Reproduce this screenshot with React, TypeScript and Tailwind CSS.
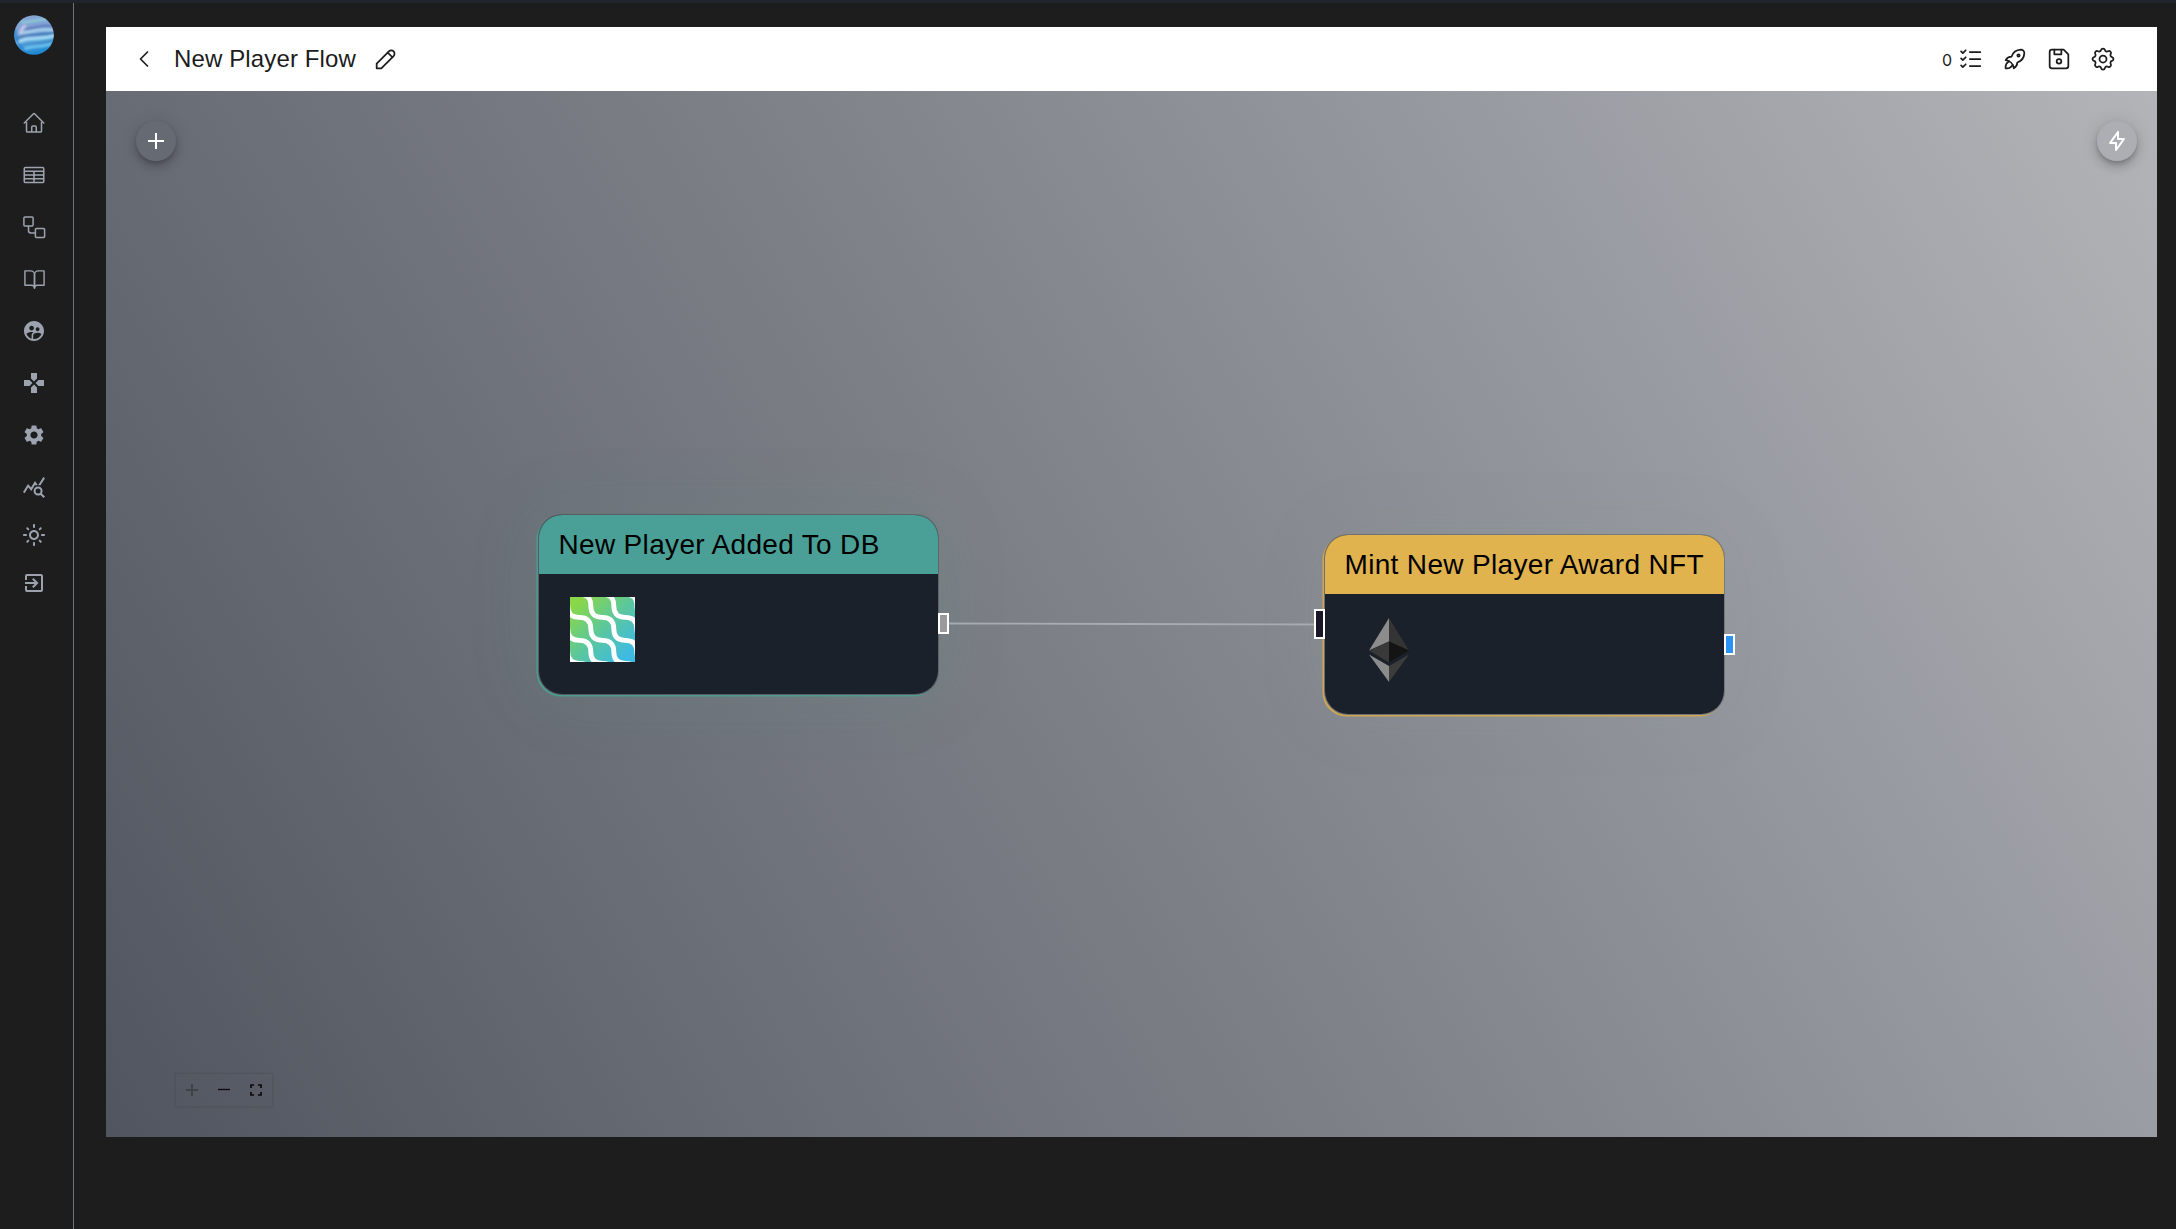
import type { ReactNode } from 'react';
import { HiOutlineHome, HiOutlineTableCells } from 'react-icons/hi2';
import { FiBookOpen } from 'react-icons/fi';
import {
  MdExitToApp,
  MdGamepad,
  MdOutlineLightMode,
  MdQueryStats,
  MdSettings,
  MdSupervisedUserCircle,
} from 'react-icons/md';
import {
  TbBolt,
  TbChevronLeft,
  TbDeviceFloppy,
  TbListCheck,
  TbPencil,
  TbRocket,
  TbSettings,
} from 'react-icons/tb';

function GlobeLogo() {
  return (
    <svg width="40" height="40" viewBox="0 0 40 40">
      <defs>
        <linearGradient id="globe" x1="0.35" y1="0" x2="0.6" y2="1">
          <stop offset="0" stopColor="#86a6d4" />
          <stop offset="0.35" stopColor="#7fa3d6" />
          <stop offset="0.65" stopColor="#5aa9dc" />
          <stop offset="1" stopColor="#1482cf" />
        </linearGradient>
        <clipPath id="globeClip">
          <circle cx="20" cy="20" r="19.8" />
        </clipPath>
        <filter id="soft" x="-10%" y="-10%" width="120%" height="120%">
          <feGaussianBlur stdDeviation="0.9" />
        </filter>
      </defs>
      <g clipPath="url(#globeClip)">
        <rect width="40" height="40" fill="url(#globe)" />
        <g fill="none" strokeLinecap="round" filter="url(#soft)">
          <path d="M8 7C16 8 24 4 33 4" stroke="#8fd0d6" strokeWidth="2" />
          <path d="M12 14C18 14 26 10 37 11" stroke="#5a74b8" strokeWidth="2" />
          <path d="M6 18C14 18 24 13 38 15" stroke="#b0d6f0" strokeWidth="2.4" />
          <path d="M3 24C9 18 22 21 39 18" stroke="#3c69ae" strokeWidth="1.8" />
          <path d="M3 28C9 22 24 25 40 21" stroke="#b4e2f8" strokeWidth="2.6" />
          <path d="M5 31C12 27 22 30 38 26" stroke="#3f86c8" strokeWidth="1.6" />
          <path d="M9 35C16 30 26 33 37 29" stroke="#7ccbf4" strokeWidth="2" />
          <path d="M1 16C1 24 5 33 14 38" stroke="#1f86d6" strokeWidth="2.4" />
          <path d="M7 18C7 14 9 12 11 11" stroke="#cfc9ea" strokeWidth="2.6" />
        </g>
      </g>
    </svg>
  );
}

function FlowIcon() {
  return (
    <svg width="24" height="24" viewBox="0 0 24 24" fill="none" stroke="currentColor" strokeWidth="1.5">
      <rect x="1.9" y="1.9" width="9.2" height="9.2" rx="1" />
      <rect x="13.4" y="13.4" width="9.2" height="9.2" rx="1" />
      <path d="M6.500 11.100v4.400q0 2.500 2.500 2.500h4.400" />
    </svg>
  );
}

const tall = 'h-[52px]';
const medium = 'h-12';

const navItems: { name: string; icon: ReactNode; size: string }[] = [
  { name: 'Home', icon: <HiOutlineHome size={24} />, size: tall },
  { name: 'Tables', icon: <HiOutlineTableCells size={24} />, size: tall },
  { name: 'Flows', icon: <FlowIcon />, size: tall },
  { name: 'Docs', icon: <FiBookOpen size={23} style={{ strokeWidth: 1.5 }} />, size: tall },
  { name: 'Users', icon: <MdSupervisedUserCircle size={24} />, size: tall },
  { name: 'Games', icon: <MdGamepad size={24} />, size: tall },
  { name: 'Settings', icon: <MdSettings size={24} />, size: tall },
  { name: 'Stats', icon: <MdQueryStats size={24} />, size: tall },
  { name: 'Theme', icon: <MdOutlineLightMode size={24} />, size: 'h-12 -mt-0.5' },
  { name: 'Sign out', icon: <MdExitToApp size={24} />, size: medium },
];

function Sidebar() {
  return (
    <aside className="flex w-[74px] shrink-0 flex-col border-r border-[#6b7280] pt-3 text-[#9ca3af]">
      <div className="flex w-[68px] justify-center">
        <GlobeLogo />
      </div>
      <nav className="mt-[42px] flex w-[68px] flex-col">
        {navItems.map((item) => (
          <a key={item.name} aria-label={item.name} className={`flex items-center justify-center ${item.size}`}>
            {item.icon}
          </a>
        ))}
      </nav>
    </aside>
  );
}

function Header() {
  return (
    <header className="flex h-16 items-center bg-white pr-10 pl-6 text-[#1c1c1c]">
      <TbChevronLeft size={28} style={{ strokeWidth: 1.5 }} />
      <h1 className="ml-4 w-[181.5px] text-2xl tracking-[0.13px] whitespace-nowrap">New Player Flow</h1>
      <TbPencil size={28} className="ml-4" style={{ strokeWidth: 1.5 }} />
      <div className="ml-auto flex items-center gap-4">
        <div className="flex items-center gap-[5px]">
          <span className="pt-0.5 font-[Inter] text-base leading-6">0</span>
          <TbListCheck size={28} style={{ strokeWidth: 1.5 }} />
        </div>
        <TbRocket size={28} style={{ strokeWidth: 1.5 }} />
        <TbDeviceFloppy size={28} style={{ strokeWidth: 1.5 }} />
        <TbSettings size={28} style={{ strokeWidth: 1.5 }} />
      </div>
    </header>
  );
}

const waveShifts = [-69, -46, -23, 0, 23, 46];

function WavesLogo() {
  return (
    <svg width="65" height="65" viewBox="0 0 65 65">
      <defs>
        <linearGradient id="waves" x1="0" y1="0" x2="1" y2="1">
          <stop offset="0.1" stopColor="#8ad749" />
          <stop offset="0.5" stopColor="#5bc79c" />
          <stop offset="0.88" stopColor="#3fbbe2" />
        </linearGradient>
      </defs>
      <rect width="65" height="65" fill="url(#waves)" />
      <g fill="none" stroke="#fff" strokeWidth="4.8">
        {waveShifts.map((dx) => (
          <path
            key={dx}
            transform={`translate(${dx} 0)`}
            d="M9.300-2.700C17-2.700 20.800 1 20.800 8.800C20.800 16.500 24.500 20.300 32.300 20.300C40 20.300 43.800 24 43.800 31.800C43.800 39.500 47.500 43.300 55.300 43.300C63 43.300 66.800 47 66.800 54.800C66.800 62.500 70.500 66.300 78.300 66.300C86 66.300 89.800 70 89.800 77.800"
          />
        ))}
      </g>
    </svg>
  );
}

function EthereumLogo() {
  return (
    <svg width="40" height="64" viewBox="0 0 40 64">
      <path d="M20 0L0 32.500L20 23.500Z" fill="#8c8c8c" />
      <path d="M20 0L40 32.500L20 23.500Z" fill="#343434" />
      <path d="M20 23.500L0 32.500L20 44.500Z" fill="#393939" />
      <path d="M20 23.500L40 32.500L20 44.500Z" fill="#141414" />
      <path d="M0 36.500L20 48L20 64Z" fill="#8c8c8c" />
      <path d="M40 36.500L20 48L20 64Z" fill="#3c3c3b" />
    </svg>
  );
}

function FlowNode(props: { title: string; place: string; frame: string; head: string; children: ReactNode }) {
  return (
    <div className={`absolute h-[181px] w-[401px] rounded-3xl ${props.place} ${props.frame}`}>
      <div className="flex h-full flex-col overflow-hidden rounded-3xl border border-black/20 bg-[#1b212a] bg-clip-padding">
        <div className={`flex h-[59px] shrink-0 items-center pl-[19.5px] text-[28px] whitespace-nowrap text-black ${props.head}`}>
          {props.title}
        </div>
        {props.children}
      </div>
    </div>
  );
}

function ZoomControls() {
  return (
    <div className="absolute bottom-[31px] left-[70px] flex h-8 w-24 shadow-[0_0_2px_1px_rgba(0,0,0,0.1)]">
      <svg className="h-8 w-8" viewBox="0 0 32 32" stroke="#3f4249" strokeWidth="2">
        <path d="M10 16h12M16 10v12" />
      </svg>
      <svg className="h-8 w-8" viewBox="0 0 32 32" stroke="#0a0a0a" strokeWidth="1.3">
        <path d="M10 15.500h12" />
      </svg>
      <svg className="h-8 w-8" viewBox="0 0 32 32" fill="none" stroke="#0a0a0a" strokeWidth="1.7">
        <path d="M11 14v-3h3M18 11h3v3M21 18v3h-3M14 21h-3v-3" />
      </svg>
    </div>
  );
}

function Canvas() {
  return (
    <div className="relative flex-1 overflow-hidden bg-[linear-gradient(59deg,#51555f_0%,#686c75_24%,#808389_50%,#999ca2_76%,#b3b4b8_100%)]">
      <svg className="absolute inset-0 h-full w-full" fill="none">
        <path d="M843 532.500C1000 532.500 1050 533.500 1208 533.500" stroke="#a9abb2" strokeWidth="1.800" />
      </svg>

      <FlowNode
        title="New Player Added To DB"
        place="left-[432px] top-[422.5px] tracking-[0.33px]"
        frame="shadow-[-1.5px_1.5px_0.5px_#4d9a90,0_0_70px_rgba(80,160,130,0.15)]"
        head="bg-[#4aa096] pt-px"
      >
        <div className="pt-[23px] pl-[31px]">
          <WavesLogo />
        </div>
      </FlowNode>
      <div className="absolute top-[522px] left-[832px] h-[21px] w-[11px] border-2 border-white bg-[#9a9a9a]" />

      <FlowNode
        title="Mint New Player Award NFT"
        place="left-[1218px] top-[443px] tracking-[0.33px]"
        frame="shadow-[-1.5px_1.5px_0.5px_#cda654,0_0_70px_rgba(130,165,165,0.12)]"
        head="bg-[#e1b34e]"
      >
        <div className="pt-6 pl-[44px]">
          <EthereumLogo />
        </div>
      </FlowNode>
      <div className="absolute top-[518px] left-[1208px] h-[30px] w-[11px] border-2 border-white bg-[#1a1527]" />
      <div className="absolute top-[543px] left-[1618px] h-[21px] w-[11px] border-2 border-white bg-[#2b93f4]" />

      <button
        aria-label="Add"
        className="absolute top-[30px] left-[30px] flex h-10 w-10 items-center justify-center rounded-full bg-[#666a73] shadow-[0_3px_5px_-1px_rgba(0,0,0,0.2),0_6px_10px_rgba(0,0,0,0.14),0_1px_18px_rgba(0,0,0,0.12)]"
      >
        <svg width="16" height="16" viewBox="0 0 16 16" stroke="#fff" strokeWidth="2">
          <path d="M0 8h16M8 0v16" />
        </svg>
      </button>
      <button
        aria-label="Run"
        className="absolute top-[30px] right-5 flex h-10 w-10 items-center justify-center rounded-full bg-[#adaeb3] text-white shadow-[0_3px_5px_-1px_rgba(0,0,0,0.2),0_6px_10px_rgba(0,0,0,0.14),0_1px_18px_rgba(0,0,0,0.12)]"
      >
        <TbBolt size={24} />
      </button>
      <ZoomControls />
    </div>
  );
}

export default function App() {
  return (
    <div className="flex h-[1229px] w-full flex-col overflow-hidden bg-[#1d1d1d] font-['Liberation_Sans',Arial,sans-serif]">
      <div className="h-[3px] shrink-0 bg-[#20242c]" />
      <div className="flex min-h-0 flex-1">
        <Sidebar />
        <main className="mt-6 mr-[19px] mb-[92px] ml-8 flex flex-1 flex-col">
          <Header />
          <Canvas />
        </main>
      </div>
    </div>
  );
}
